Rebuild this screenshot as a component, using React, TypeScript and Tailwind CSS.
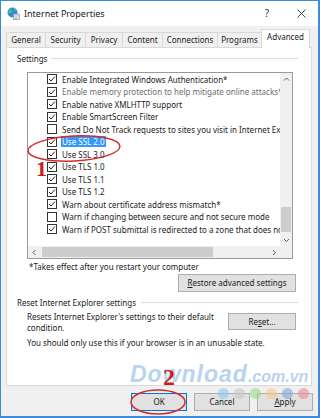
const items = [
  { t: 'Enable Integrated Windows Authentication*', c: true },
  { t: 'Enable memory protection to help mitigate online attacks*', c: true, dim: true },
  { t: 'Enable native XMLHTTP support', c: true },
  { t: 'Enable SmartScreen Filter', c: true },
  { t: 'Send Do Not Track requests to sites you visit in Internet Explorer', c: false },
  { t: 'Use SSL 2.0', c: true, sel: true },
  { t: 'Use SSL 3.0', c: true },
  { t: 'Use TLS 1.0', c: true },
  { t: 'Use TLS 1.1', c: true },
  { t: 'Use TLS 1.2', c: true },
  { t: 'Warn about certificate address mismatch*', c: true },
  { t: 'Warn if changing between secure and not secure mode', c: false },
  { t: 'Warn if POST submittal is redirected to a zone that does not permit posts', c: true },
];

const tabs = [
  { label: 'General', w: 'w-[39px]' },
  { label: 'Security', w: 'w-[40px]' },
  { label: 'Privacy', w: 'w-[37px]' },
  { label: 'Content', w: 'w-[40px]' },
  { label: 'Connections', w: 'w-[55px]' },
  { label: 'Programs', w: 'w-[44px]' },
];

const GlobeIcon = () => (
  <svg width="13" height="13" viewBox="0 0 13 13">
    <circle cx="5.5" cy="5.5" r="5" fill="#2c8fd6" />
    <path d="M2 3.5 C3 2 4.5 2.2 5 3.4 C5.4 4.6 4 5 3.2 6 C2.6 6.8 1.4 6 1.2 5 Z" fill="#5cbf7a" />
    <path d="M6.5 1.2 C8 1.4 9.6 2.6 9.8 4 C8.8 4.2 7.6 3.6 6.8 2.6 Z" fill="#5cbf7a" />
    <rect x="6.5" y="7" width="6" height="5.5" fill="#f4f4f4" stroke="#7a8a99" strokeWidth="0.7" />
    <path d="M7.6 8.8 H11.4 M7.6 10.2 H11.4 M7.6 11.5 H10" stroke="#8aa0b5" strokeWidth="0.6" />
  </svg>
);

const Chevron = ({ dir }: { dir: 'up' | 'down' | 'left' | 'right' }) => {
  const d = {
    up: 'M1 4.5 L3.5 2 L6 4.5',
    down: 'M1 2 L3.5 4.5 L6 2',
    left: 'M4.5 1 L2 3.5 L4.5 6',
    right: 'M2 1 L4.5 3.5 L2 6',
  }[dir];
  return (
    <svg width="7" height="7" viewBox="0 0 7 7">
      <path d={d} stroke="#606060" strokeWidth="1" fill="none" />
    </svg>
  );
};

const Check = ({ on }: { on: boolean }) => (
  <span className="w-[10px] h-[10px] shrink-0 border border-[#333333] bg-white flex items-center justify-center">
    {on && (
      <svg width="8" height="8" viewBox="0 0 8 8">
        <path d="M1 4 L3 6 L7 1.5" stroke="#222222" strokeWidth="1" fill="none" />
      </svg>
    )}
  </span>
);

export default function App() {
  return (
    <div className="relative w-[320px] h-[418px] bg-[#f0f0f0] border-t border-l border-r-2 border-b-2 border-[#3d8bd9] overflow-hidden font-['Noto_Sans',sans-serif] text-[8px] text-[#1a1a1a]">
      {/* title bar */}
      <div className="h-[25px] bg-white flex items-center pl-[6px]">
        <GlobeIcon />
        <span className="ml-[4px] text-[9px] text-[#222222]">Internet Properties</span>
        <span className="ml-auto text-[10px] text-[#333333] mr-[28px]">?</span>
        <svg width="9" height="9" viewBox="0 0 9 9" className="mr-[12px]">
          <path d="M0.5 0.5 L8.5 8.5 M8.5 0.5 L0.5 8.5" stroke="#333333" strokeWidth="0.9" />
        </svg>
      </div>

      {/* tabs */}
      <div className="h-[21px] flex items-end pl-[5px]">
        {tabs.map((tab) => (
          <div
            key={tab.label}
            className={`${tab.w} h-[15px] bg-[#f0f0f0] border-l border-t border-[#d9d9d9] flex items-center justify-center text-[#1a1a1a]`}
          >
            {tab.label}
          </div>
        ))}
        <div className="relative z-10 w-[49px] h-[19px] -mb-px bg-white border border-b-0 border-[#d9d9d9] flex items-start justify-center pt-[1px]">
          Advanced
        </div>
      </div>

      {/* panel */}
      <div className="ml-[5px] w-[306px] h-[339px] bg-white border border-[#d9d9d9] flex flex-col">
        <div className="mt-[5px] h-[11px] flex items-center pl-[10px] pr-[13px]">
          <span>Settings</span>
          <span className="flex-1 h-px bg-[#dcdcdc] ml-[4px]" />
        </div>

        {/* listbox */}
        <div className="mt-[8px] ml-[20px] w-[266px] h-[187px] border border-[#9a9a9a] flex flex-col">
          <div className="flex flex-1 min-h-0">
            <div className="flex-1 overflow-hidden">
              {items.map((it) => (
                <div key={it.t} className="h-[12.5px] flex items-center pl-[19px] whitespace-nowrap">
                  <Check on={it.c} />
                  <span
                    className={`ml-[4px] px-[1px] leading-[11px] ${
                      it.sel ? 'bg-[#3399ff] text-white' : it.dim ? 'text-[#6d6d6d]' : 'text-[#1a1a1a]'
                    }`}
                  >
                    {it.t}
                  </span>
                </div>
              ))}
            </div>
            <div className="w-[12px] bg-[#f0f0f0] flex flex-col">
              <div className="h-[12px] flex items-center justify-center">
                <Chevron dir="up" />
              </div>
              <div className="flex-1 px-[1px]">
                <div className="mt-[122px] h-[25px] bg-[#cdcdcd]" />
              </div>
              <div className="h-[12px] flex items-center justify-center">
                <Chevron dir="down" />
              </div>
            </div>
          </div>
          <div className="h-[12px] flex bg-[#f0f0f0]">
            <div className="w-[12px] flex items-center justify-center">
              <Chevron dir="left" />
            </div>
            <div className="flex-1 py-[1px]">
              <div className="ml-[2px] w-[171px] h-full bg-[#cdcdcd]" />
            </div>
            <div className="w-[12px] flex items-center justify-center">
              <Chevron dir="right" />
            </div>
            <div className="w-[12px] bg-[#f0f0f0]" />
          </div>
        </div>

        <div className="mt-[2px] pl-[22px] h-[11px] leading-[11px]">*Takes effect after you restart your computer</div>

        <div className="mt-[2px] mr-[15px] self-end w-[118px] h-[18px] bg-[#e1e1e1] border border-[#adadad] flex items-center justify-center">
          <span>
            <span className="underline">R</span>estore advanced settings
          </span>
        </div>

        <div className="mt-[5px] h-[11px] flex items-center pl-[10px] pr-[13px]">
          <span>Reset Internet Explorer settings</span>
          <span className="flex-1 h-px bg-[#dcdcdc] ml-[5px]" />
        </div>

        <div className="mt-[3px] flex pl-[20px] pr-[15px]">
          <div className="leading-[11px]">
            <div>Resets Internet Explorer's settings to their default</div>
            <div>condition.</div>
          </div>
          <div className="ml-auto mt-[2px] w-[68px] h-[17px] bg-[#e1e1e1] border border-[#adadad] flex items-center justify-center">
            <span>
              Re<span className="underline">s</span>et...
            </span>
          </div>
        </div>

        <div className="mt-[4px] pl-[20px] h-[11px] leading-[11px]">
          You should only use this if your browser is in an unusable state.
        </div>
      </div>

      {/* dialog buttons */}
      <div className="mt-[7px] flex justify-end gap-[7px] pr-[5px]">
        <div className="w-[56px] h-[18px] bg-[#e1e1e1] border border-[#0078d7] flex items-center justify-center">OK</div>
        <div className="w-[56px] h-[18px] bg-[#e1e1e1] border border-[#adadad] flex items-center justify-center">Cancel</div>
        <div className="w-[56px] h-[18px] bg-[#e1e1e1] border border-[#adadad] flex items-center justify-center">
          <span>
            <span className="underline">A</span>pply
          </span>
        </div>
      </div>

      {/* watermark */}
      <div className="pointer-events-none absolute left-[129px] top-[362px] flex items-baseline italic font-bold font-['Liberation_Sans',sans-serif] text-[#a9c9ea] opacity-80 leading-none">
        <span className="text-[23px] tracking-[1px]">Download</span>
        <span className="text-[16px]">.com.vn</span>
      </div>
      <div className="pointer-events-none absolute left-[217px] top-[387px] flex gap-[5px] opacity-60">
        <span className="w-[11px] h-[11px] rounded-full bg-[#8fc9ee]" />
        <span className="w-[11px] h-[11px] rounded-full bg-[#c9c9c9]" />
        <span className="w-[11px] h-[11px] rounded-full bg-[#9fd98a]" />
        <span className="w-[11px] h-[11px] rounded-full bg-[#f6c98a]" />
        <span className="w-[11px] h-[11px] rounded-full bg-[#7ea8de]" />
        <span className="w-[11px] h-[11px] rounded-full bg-[#ee8a96]" />
      </div>

      {/* annotations */}
      <svg className="pointer-events-none absolute left-0 top-0" width="320" height="418">
        <ellipse cx="73" cy="147.5" rx="46" ry="12.5" transform="rotate(-3 73 147.5)" fill="none" stroke="#d42a2a" strokeWidth="1.5" />
        <ellipse cx="157" cy="401" rx="27" ry="12" fill="none" stroke="#d42a2a" strokeWidth="1.5" />
      </svg>
      <span className="pointer-events-none absolute left-[35px] top-[157px] font-['Liberation_Serif',serif] font-bold text-[22px] leading-none text-[#c81e1e]">
        1
      </span>
      <span className="pointer-events-none absolute left-[162px] top-[364px] font-['Liberation_Serif',serif] font-bold text-[24px] leading-none text-[#c81e1e]">
        2
      </span>
    </div>
  );
}
